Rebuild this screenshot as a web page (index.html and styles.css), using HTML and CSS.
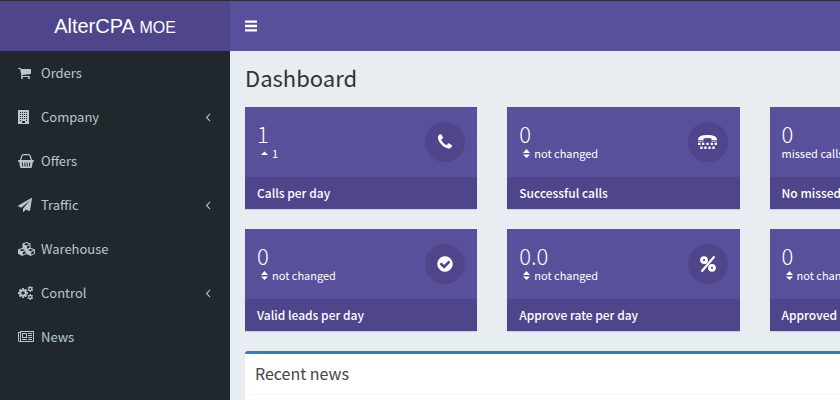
FILE: index.html
```html
<!DOCTYPE html>
<html lang="en">
  <head>
    <meta charset="utf-8">
    <title>AlterCPA MOE - Dashboard</title>
    <link rel="stylesheet" href="styles.css">
  </head>
  <body>
    <header class="main-header">
      <a href="#" class="logo">AlterCPA <small>MOE</small></a>
      <nav class="navbar">
        <button type="button" class="sidebar-toggle" aria-label="Toggle navigation">
          <svg width="12" height="12" viewBox="0 0 12 12"><path d="M0 .4h12v2.400H0zM0 4.800h12v2.400H0zM0 9.200h12v2.400H0z"/></svg>
        </button>
      </nav>
    </header>

    <div class="wrapper">
      <aside class="sidebar">
        <ul class="menu">
          <li>
            <a href="#">
              <span class="icon"><svg width="14" height="14" viewBox="64 0 1792 1792"><path d="M704 1536q0 52-38 90t-90 38-90-38-38-90 38-90 90-38 90 38 38 90zm896 0q0 52-38 90t-90 38-90-38-38-90 38-90 90-38 90 38 38 90zm128-1088v512q0 24-16.500 42.500t-40.500 21.500l-1044 122q13 60 13 70 0 16-24 64h920q26 0 45 19t19 45-19 45-45 19h-1024q-26 0-45-19t-19-45q0-11 8-31.500t16-36 21.500-40 15.500-29.500l-177-823h-204q-26 0-45-19t-19-45 19-45 45-19h256q16 0 28.500 6.500t19.500 15.500 13 24.500 8 26 5.500 29.500 4.500 26h1201q26 0 45 19t19 45z"/></svg></span>
              <span>Orders</span>
            </a>
          </li>
          <li>
            <a href="#">
              <span class="icon"><svg width="11" height="14" viewBox="0 0 11 14"><path fill-rule="evenodd" d="M0 0h11v14H0zM2 2v1h1V2zM4 2v1h1V2zM6 2v1h1V2zM8 2v1h1V2zM2 4v1h1V4zM4 4v1h1V4zM6 4v1h1V4zM8 4v1h1V4zM2 6v1h1V6zM4 6v1h1V6zM6 6v1h1V6zM8 6v1h1V6zM2 8v1h1V8zM4 8v1h1V8zM6 8v1h1V8zM8 8v1h1V8zM2 10v1h1v-1zM8 10v1h1v-1zM4 11v2h3v-2z"/></svg></span>
              <span>Company</span>
              <svg class="angle" width="14" height="14" viewBox="0 0 1792 1792"><path d="M1203 544q0 13-10 23l-393 393 393 393q10 10 10 23t-10 23l-50 50q-10 10-23 10t-23-10l-466-466q-10-10-10-23t10-23l466-466q10-10 23-10t23 10l50 50q10 10 10 23z"/></svg>
            </a>
          </li>
          <li>
            <a href="#">
              <span class="icon"><svg width="16" height="14" viewBox="0 0 16 14"><path d="M2.500 6 4 1.800Q4.300.7 5.500.7h5q1.200 0 1.500 1.100L13.500 6" fill="none" stroke="currentColor" stroke-width="1.200"/><path fill-rule="evenodd" d="M1 6h14q1 0 1 1t-1 1h-.2l-.9 5q-.2 1-1.200 1H3.300q-1 0-1.200-1l-.9-5H1Q0 8 0 7t1-1zM3.800 8.500l.4 4h1l-.4-4zM6.400 8.500v4h1v-4zM8.700 8.500v4h1v-4zM11.300 8.500l-.4 4h1l.4-4z"/></svg></span>
              <span>Offers</span>
            </a>
          </li>
          <li>
            <a href="#">
              <span class="icon"><svg width="14" height="14" viewBox="0 0 1792 1792"><path d="M1764 11q33 24 27 64l-256 1536q-5 29-32 45-14 8-31 8-11 0-24-5l-453-185-242 295q-18 23-49 23-13 0-22-4-19-7-30.500-23.500t-11.500-36.500v-349l864-1059-1069 925-395-162q-37-14-40-55-2-40 32-59l1664-960q15-9 32-9 20 0 36 11z"/></svg></span>
              <span>Traffic</span>
              <svg class="angle" width="14" height="14" viewBox="0 0 1792 1792"><path d="M1203 544q0 13-10 23l-393 393 393 393q10 10 10 23t-10 23l-50 50q-10 10-23 10t-23-10l-466-466q-10-10-10-23t10-23l466-466q10-10 23-10t23 10l50 50q10 10 10 23z"/></svg>
            </a>
          </li>
          <li>
            <a href="#">
              <span class="icon"><svg width="17" height="14" viewBox="0 0 17 14"><path fill-rule="evenodd" d="M8.500 0l4 1.600v4.200l4.500 1.800v4.200L12.700 14 8.500 12 4.300 14 0 11.800V7.600l4.500-1.800V1.600zM8.500 1.100 5.700 2.200l2.800 1.200 2.800-1.200zM9 4.300v2.400l2.500-1V3.300zM4.300 6.900 1.500 8l2.800 1.200L7.100 8zM4.800 10.200v2.500l2.700-1.300V9zM12.700 6.900 9.900 8l2.800 1.200L15.500 8zM13.200 10.200v2.500l2.800-1.300V9z"/></svg></span>
              <span>Warehouse</span>
            </a>
          </li>
          <li>
            <a href="#">
              <span class="icon"><svg width="15" height="14" viewBox="0 0 15 14" fill="none" stroke="currentColor"><circle cx="5" cy="7" r="2.800" stroke-width="2"/><path d="M5 2v1.500M5 10.500V12M0 7h1.500M8.500 7H10M1.500 3.500l1 1M7.500 9.500l1 1M8.500 3.500l-1 1M2.500 9.500l-1 1" stroke-width="1.800"/><circle cx="12.300" cy="3" r="1.600" stroke-width="1.200"/><path d="M12.300 0v1.200M12.300 4.800V6M9.700 1.500l1 .6M13.900 3.900l1 .6M14.900 1.500l-1 .6M10.700 3.900l-1 .6" stroke-width="1.200"/><circle cx="12.300" cy="11" r="1.600" stroke-width="1.200"/><path d="M12.300 8v1.200M12.300 12.800V14M9.700 9.500l1 .6M13.900 11.900l1 .6M14.900 9.500l-1 .6M10.700 11.900l-1 .6" stroke-width="1.200"/></svg></span>
              <span>Control</span>
              <svg class="angle" width="14" height="14" viewBox="0 0 1792 1792"><path d="M1203 544q0 13-10 23l-393 393 393 393q10 10 10 23t-10 23l-50 50q-10 10-23 10t-23-10l-466-466q-10-10-10-23t10-23l466-466q10-10 23-10t23 10l50 50q10 10 10 23z"/></svg>
            </a>
          </li>
          <li>
            <a href="#">
              <span class="icon"><svg width="16" height="12" viewBox="0 0 16 12"><path fill-rule="evenodd" d="M2 0h14v10q0 1-1 1H1.500Q0 11 0 9.500V1h2zM1 2v7.500q0 .5.500.5t.5-.5V2zM3 1v9h12V1zM4 2h5v5H4zM5 3v3h3V3zM10 2h4v1h-4zM10 4h4v1h-4zM10 6h4v1h-4zM4 8h5v1H4zM10 8h4v1h-4z"/></svg></span>
              <span>News</span>
            </a>
          </li>
        </ul>
      </aside>

      <main class="content">
        <h1>Dashboard</h1>

        <div class="stats">
          <div class="stat">
            <div class="stat-body">
              <div>
                <div class="stat-value">1</div>
                <div class="stat-diff"><svg width="7" height="9" viewBox="0 0 7 9"><path d="M0 6l3.500-3.500L7 6z"/></svg>1</div>
              </div>
              <span class="stat-icon"><svg width="18" height="18" viewBox="0 0 1792 1792"><path d="M1600 1240q0 27-10 70.500t-21 68.500q-21 50-122 106-94 51-186 51-27 0-53-3.500t-57.500-12.500-47-14.500-55.500-20.500-49-18q-98-35-175-83-127-79-264-216t-216-264q-48-77-83-175-3-9-18-49t-20.500-55.500-14.500-47-12.500-57.500-3.500-53q0-92 51-186 56-101 106-122 25-11 68.500-21t70.500-10q14 0 21 3 18 6 53 76 11 19 30 54t35 63.500 31 53.500q3 4 17.500 25t21.500 35.500 7 28.500q0 20-28.500 50t-62 55-62 53-28.500 46q0 9 5 22.500t8.500 20.500 14 24 11.500 19q76 137 174 235t235 174q2 1 19 11.500t24 14 20.500 8.500 22.500 5q18 0 46-28.500t53-62 55-62 50-28.500q14 0 28.500 7t35.500 21.500 25 17.500q25 15 53.500 31t63.500 35 54 30q70 35 76 53 3 7 3 21z"/></svg></span>
            </div>
            <div class="stat-label">Calls per day</div>
          </div>
          <div class="stat">
            <div class="stat-body">
              <div>
                <div class="stat-value">0</div>
                <div class="stat-diff"><svg width="7" height="9" viewBox="0 0 7 9"><path d="M0 4l3.500-4L7 4zM0 5.500h7L3.500 9z"/></svg>not changed</div>
              </div>
              <span class="stat-icon"><svg width="19" height="16" viewBox="0 0 19 16"><path d="M0 5.500Q0 3 2.500 2T9.500 1t7 1T19 5.500v.8h-5.500V4.500Q13 4 9.500 4t-4 .5v1.800H0zM0 7h5.500v.6H0zM13.500 7H19v.6h-5.500zM0 8.800h2.500V11H0zM4 8.800h2.300V11H4zM8.300 8.800h2.400V11H8.300zM12.700 8.800H15V11h-2.300zM16.500 8.800H19V11h-2.500zM2.300 12.500h2.300V15H2.300zM6.300 12.500h2.300V15H6.300zM10.400 12.500h2.300V15h-2.300zM14.400 12.500h2.300V15h-2.300z"/></svg></span>
            </div>
            <div class="stat-label">Successful calls</div>
          </div>
          <div class="stat">
            <div class="stat-body">
              <div>
                <div class="stat-value">0</div>
                <div class="stat-diff">missed calls</div>
              </div>
            </div>
            <div class="stat-label">No missed calls</div>
          </div>
          <div class="stat">
            <div class="stat-body"></div>
            <div class="stat-label"></div>
          </div>
          <div class="stat">
            <div class="stat-body">
              <div>
                <div class="stat-value">0</div>
                <div class="stat-diff"><svg width="7" height="9" viewBox="0 0 7 9"><path d="M0 4l3.500-4L7 4zM0 5.500h7L3.500 9z"/></svg>not changed</div>
              </div>
              <span class="stat-icon"><svg width="18" height="18" viewBox="0 0 1792 1792"><path d="M1412 734q0-28-18-46l-91-90q-19-19-45-19t-45 19l-408 407-226-226q-19-19-45-19t-45 19l-91 90q-18 18-18 46 0 27 18 45l362 362q19 19 45 19 27 0 46-19l543-543q18-18 18-45zm252 162q0 209-103 385.500t-279.500 279.500-385.500 103-385.500-103-279.500-279.500-103-385.500 103-385.500 279.500-279.500 385.500-103 385.500 103 279.500 279.500 103 385.500z"/></svg></span>
            </div>
            <div class="stat-label">Valid leads per day</div>
          </div>
          <div class="stat">
            <div class="stat-body">
              <div>
                <div class="stat-value">0.0</div>
                <div class="stat-diff"><svg width="7" height="9" viewBox="0 0 7 9"><path d="M0 4l3.500-4L7 4zM0 5.500h7L3.500 9z"/></svg>not changed</div>
              </div>
              <span class="stat-icon"><svg width="16" height="16" viewBox="0 0 16 16" fill="none" stroke="currentColor" stroke-width="2.800"><circle cx="4" cy="4.200" r="2.500"/><circle cx="12" cy="11.800" r="2.500"/><path d="M13.800 1.200 2.200 14.800" stroke-width="2.200" stroke-linecap="round"/></svg></span>
            </div>
            <div class="stat-label">Approve rate per day</div>
          </div>
          <div class="stat">
            <div class="stat-body">
              <div>
                <div class="stat-value">0</div>
                <div class="stat-diff"><svg width="7" height="9" viewBox="0 0 7 9"><path d="M0 4l3.500-4L7 4zM0 5.500h7L3.500 9z"/></svg>not changed</div>
              </div>
            </div>
            <div class="stat-label">Approved per day</div>
          </div>
          <div class="stat">
            <div class="stat-body"></div>
            <div class="stat-label"></div>
          </div>
        </div>

        <section class="box">
          <h2 class="box-header">Recent news</h2>
          <div class="box-body"></div>
        </section>
      </main>
    </div>
  </body>
</html>
```
FILE: styles.css
```css
* {
  box-sizing: border-box;
}
html,
body {
  height: 100%;
}
body {
  margin: 0;
  display: flex;
  flex-direction: column;
  overflow: hidden;
  border-top: 1px solid #2b2b33;
  background-color: #e8edf1;
  color: #333;
  font-family: "Source Sans Pro", "Noto Sans CJK SC", sans-serif;
  font-size: 13px;
  line-height: 20px;
}
a {
  color: inherit;
  text-decoration: none;
}
svg {
  fill: currentColor;
}
svg[fill="none"] {
  fill: none;
}

.main-header {
  display: flex;
  flex: none;
  color: #fff;
}
.logo {
  width: 230px;
  background-color: #4e458a;
  font-family: "Helvetica Neue", "Liberation Sans", sans-serif;
  font-size: 20px;
  line-height: 50px;
  text-align: center;
}
.logo small {
  font-size: 16px;
  line-height: 20px;
}
.navbar {
  flex: 1;
  display: flex;
  background-color: #58509a;
}
.sidebar-toggle {
  display: flex;
  align-items: center;
  padding: 0 15px;
  border: 0;
  background: none;
  color: inherit;
  cursor: pointer;
}

.wrapper {
  flex: 1;
  display: flex;
  min-height: 0;
}
.sidebar {
  flex: none;
  width: 230px;
  background-color: #20282e;
  color: #b8c7ce;
}
.menu {
  margin: 0;
  padding: 0;
  list-style: none;
}
.menu a {
  display: flex;
  align-items: center;
  height: 44px;
  padding: 0 15px 0 18px;
}
.icon {
  display: flex;
  width: 23px;
}
.angle {
  margin-left: auto;
}

.content {
  flex: 1 0 auto;
  min-width: 1049px;
  padding: 15px;
}
h1 {
  margin: 0 0 19px;
  font-size: 22px;
  font-weight: 400;
  line-height: 22px;
}
.stats {
  display: grid;
  grid-template-columns: repeat(4, 1fr);
  gap: 20px 30px;
  margin-bottom: 20px;
}
.stat {
  background-color: #58509a;
  color: #fff;
  box-shadow: 0 1px 1px rgba(0, 0, 0, 0.1);
}
.stat-body {
  display: flex;
  justify-content: space-between;
  align-items: center;
  height: 70px;
  padding: 0 12px;
}
.stat-value {
  font-size: 22px;
  font-weight: 300;
  line-height: 22px;
}
.stat-diff {
  display: flex;
  align-items: center;
  font-size: 11px;
  line-height: 18px;
}
.stat-diff svg {
  margin: 0 4px;
}
.stat-icon {
  display: flex;
  justify-content: center;
  align-items: center;
  width: 40px;
  height: 40px;
  border-radius: 50%;
  background-color: #4e458a;
}
.stat-label {
  height: 32px;
  padding: 0 12px;
  background-color: #4e458a;
  font-size: 12px;
  font-weight: 500;
  line-height: 32px;
}

.box {
  border-top: 3px solid #2e80b5;
  border-radius: 3px;
  background-color: #fff;
  box-shadow: 0 1px 1px rgba(0, 0, 0, 0.1);
}
.box-header {
  margin: 0;
  padding: 9px 10px 11px;
  border-bottom: 1px solid #f4f4f4;
  color: #444;
  font-size: 16px;
  font-weight: 400;
  line-height: 20px;
}
.box-body {
  min-height: 60px;
}
```
